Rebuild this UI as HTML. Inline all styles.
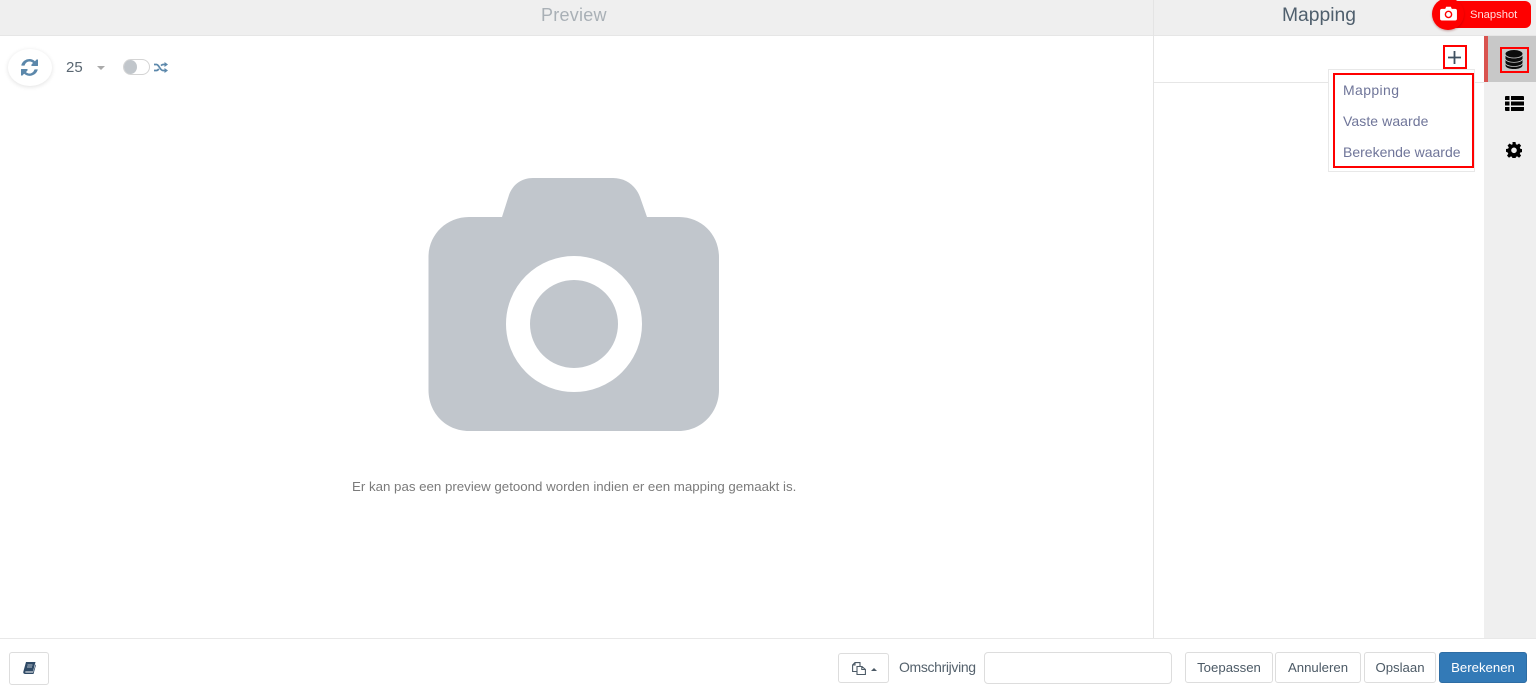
<!DOCTYPE html>
<html><head><meta charset="utf-8">
<style>
*{box-sizing:border-box}
html,body{margin:0;padding:0;width:1536px;height:690px;overflow:hidden;background:#fff;font-family:"Liberation Sans",sans-serif;color:#555}
.a{position:absolute}
.t{position:absolute;white-space:nowrap;line-height:1}
.btn{position:absolute;top:652px;height:31px;border:1px solid #ddd;border-radius:3px;background:#fff;color:#4c5a66;font-size:13.200px;line-height:29px;text-align:center;white-space:nowrap}
</style></head><body>
<div class="a" style="left:0;top:0;width:1536px;height:36px;background:#efefef;border-bottom:1px solid #e6e6e6"></div>
<div class="a" style="left:1153px;top:0;width:1px;height:638px;background:#e4e4e4"></div>
<div class="t" style="left:541px;top:6px;font-size:18px;color:#a9b0b6;letter-spacing:.25px">Preview</div>
<div class="t" style="left:1282px;top:6px;font-size:19.300px;color:#4f5f6d">Mapping</div>

<!-- Snapshot -->
<div class="a" style="left:1440px;top:1px;width:91px;height:27px;background:#fe0000;border-radius:6px"></div>
<div class="a" style="left:1432px;top:-2px;width:32px;height:32px;background:#fe0000;border-radius:50%;box-shadow:0 1px 2px rgba(120,0,0,.35)"></div>
<svg class="a" style="left:1439px;top:6px" width="19" height="15" viewBox="0 0 19 16"><path fill="#fff" d="M2.500 3H6L7 .8h5L13 3h3.500A2 2 0 0 1 18.500 5v8.500a2 2 0 0 1-2 2h-14a2 2 0 0 1-2-2V5a2 2 0 0 1 2-2z"/><circle cx="9.500" cy="9" r="3.300" fill="none" stroke="#fe0000" stroke-width="1.500"/></svg>
<div class="t" style="left:1470px;top:10px;font-size:11.200px;color:#ffdcdc">Snapshot</div>

<!-- right sidebar -->
<div class="a" style="left:1484px;top:36px;width:52px;height:602px;background:#efefef"></div>
<div class="a" style="left:1484px;top:36px;width:52px;height:46px;background:#c8c8c8"></div>
<div class="a" style="left:1484px;top:36px;width:4px;height:46px;background:#d9534f"></div>
<div class="a" style="left:1500px;top:47px;width:29px;height:26px;border:2px solid #f00"></div>
<svg class="a" style="left:1505px;top:50px" width="18" height="19" viewBox="0 0 18 19"><ellipse cx="9" cy="3.800" rx="8.500" ry="3.800" fill="#0c0c0c"/><path fill="#0c0c0c" d="M.5 5.800C2 7.800 5.500 8.400 9 8.400s7-.6 8.500-2.600v3C16.500 11 13 12 9 12S1.500 11 .5 8.800zM.5 10C2 12 5.500 12.700 9 12.700s7-.7 8.500-2.700v3C16.500 15 13 16 9 16S1.500 15 .5 13zM.5 14.200C2 16.200 5.500 16.800 9 16.800s7-.6 8.500-2.600v1C17.500 17.500 13.700 19 9 19S.5 17.500.5 15.200z"/></svg>
<svg class="a" style="left:1505px;top:96px" width="19" height="15" viewBox="0 0 19 15"><path fill="#000" d="M0 1a1 1 0 0 1 1-1h3.500v4H0zM6 0h12a1 1 0 0 1 1 1v3H6zM0 5.500h4.500v4H0zM6 5.500h13v4H6zM0 11h4.500v4H1a1 1 0 0 1-1-1zM6 11h13v3a1 1 0 0 1-1 1H6z"/></svg>
<svg class="a" style="left:1506px;top:142px" width="16" height="16" viewBox="0 0 16 16"><path fill="#000" fill-rule="evenodd" d="M6.500 0h3l.4 2.200 1.300.6L13.100 1.500l2 2.100-1.300 1.900.5 1.300 2.200.4v2.800l-2.200.5-.5 1.200 1.300 1.900-2 2.100-1.900-1.300-1.300.5-.4 2.200h-3l-.4-2.200-1.200-.5-1.900 1.300-2-2.100 1.300-1.900-.6-1.200L0 9.800V7l2.200-.4.600-1.300L1.500 3.600l2-2.100 1.900 1.300 1.200-.6zM8 5.500a2.800 2.800 0 1 0 0 5.600 2.800 2.800 0 0 0 0-5.600z"/></svg>

<!-- mapping panel -->
<div class="a" style="left:1154px;top:82px;width:330px;height:1px;background:#e6e6e6"></div>
<div class="a" style="left:1443px;top:45px;width:24px;height:24px;border:2px solid #f00"></div>
<svg class="a" style="left:1448px;top:51px" width="13" height="13" viewBox="0 0 13 13"><path d="M6.500 0v13M0 6.500h13" stroke="#3f5060" stroke-width="1.800"/></svg>
<div class="a" style="left:1328px;top:69px;width:147px;height:103px;background:#fff;border:1px solid #e8e8e8"></div>
<div class="a" style="left:1333px;top:73px;width:141px;height:95px;border:2px solid #f00;background:#fff"></div>
<div class="t" style="left:1343px;top:83px;font-size:14px;color:#6f7599;letter-spacing:.38px">Mapping</div>
<div class="t" style="left:1343px;top:114px;font-size:14px;color:#6f7599;letter-spacing:.08px">Vaste waarde</div>
<div class="t" style="left:1343px;top:145px;font-size:14px;color:#6f7599;letter-spacing:0">Berekende waarde</div>

<!-- toolbar -->
<div class="a" style="left:8px;top:49px;width:44px;height:37px;background:#fff;border-radius:50%;box-shadow:0 1px 5px rgba(0,0,0,.12)"></div>
<svg class="a" style="left:21px;top:59px" width="17" height="17" viewBox="0 0 17 17"><path fill="#5c88ab" d="M8.500 0c2.100 0 4 .8 5.400 2.200L15.600.5c.4-.3 1.400-.2 1.400.5v5.500c0 .3-.2.500-.5.500H11c-.6 0-.9-1-.5-1.400l1.500-1.700A5 5 0 0 0 3.700 6.200c-.1.300-.3.400-.6.400H.8c-.4 0-.6-.3-.5-.6A8.500 8.500 0 0 1 8.500 0zM.5 10h5.500c.6 0 .9 1 .5 1.400l-1.500 1.700a5 5 0 0 0 8.300-2.300c.1-.3.300-.4.600-.4h2.300c.4 0 .6.300.5.600A8.500 8.500 0 0 1 3.100 14.800L1.400 16.500c-.4.300-1.400.2-1.400-.5v-5.500c0-.3.200-.5.500-.5z"/></svg>
<div class="t" style="left:66px;top:60px;font-size:15px;color:#5a6772">25</div>
<div class="a" style="left:97px;top:66px;width:0;height:0;border-left:4px solid transparent;border-right:4px solid transparent;border-top:4px solid #aaa"></div>
<div class="a" style="left:123px;top:59px;width:27px;height:16px;border:1px solid #d4d4d4;border-radius:8px;background:#fff"></div>
<div class="a" style="left:124px;top:60px;width:13px;height:14px;border-radius:50%;background:#c1c6cb"></div>
<svg class="a" style="left:154px;top:62px" width="14" height="11" viewBox="0 0 14 11"><path fill="none" stroke="#5c88ab" stroke-width="1.700" d="M0 2.500h2.500c2.500 0 3.500 6 6.500 6h2M0 8.500h2.500c1 0 1.700-.7 2.300-1.600M7 3.600c.6-.6 1.200-1.100 2-1.100h2"/><path fill="#5c88ab" d="M10.500 0 14 2.500 10.500 5zM10.500 6 14 8.500 10.500 11z"/></svg>

<!-- big camera -->
<svg class="a" style="left:428px;top:178px" width="292" height="253" viewBox="428 178 292 253"><path fill="#c1c6cc" d="M533 178h80c13 0 23 8 27 19l7 20h32c23 0 40 18 40 40v133c0 23-18 41-40 41H469c-23 0-40.500-18-40.500-41V257c0-22 17.500-40 40.500-40h33l7-22c4-11 13-17 24-17z"/><circle cx="574" cy="324" r="56" fill="none" stroke="#fff" stroke-width="24"/></svg>
<div class="t" style="left:352px;top:480px;font-size:13.300px;color:#7b7b7b;letter-spacing:-.01px">Er kan pas een preview getoond worden indien er een mapping gemaakt is.</div>

<!-- footer -->
<div class="a" style="left:0;top:638px;width:1536px;height:1px;background:#e8e8e8"></div>
<div class="btn" style="left:9px;top:652px;width:40px;height:33px"></div>
<svg class="a" style="left:23px;top:662px" width="13" height="12" viewBox="0 0 13 12"><path fill="#2f4a66" d="M3 0h9.500L10 9.500H2.800c-.8 0-.8 1 0 1H10l2.500-8 .5.500-2.500 9H2C.8 12 0 11 .3 9.800z"/><path stroke="#dfe6ec" stroke-width=".8" d="M4.500 3h5M4 5h5"/></svg>
<div class="btn" style="left:838px;top:653px;width:51px;height:30px"></div>
<svg class="a" style="left:852px;top:662px" width="14" height="13" viewBox="0 0 14 13"><path fill="none" stroke="#4c5a66" stroke-width="1.100" d="M4.500 9.500H.6V3L3 .6h5V4M5 4.500h5l3.400 3v5H5zM3 .6V3H.6M9.800 4.500V7.500h3.600"/></svg>
<div class="a" style="left:871px;top:668px;width:0;height:0;border-left:3px solid transparent;border-right:3px solid transparent;border-bottom:3px solid #4c5a66"></div>
<div class="t" style="left:899px;top:660px;font-size:14px;color:#55626d;letter-spacing:-.35px">Omschrijving</div>
<div class="a" style="left:984px;top:652px;width:188px;height:32px;border:1px solid #ddd;border-radius:4px;background:#fff"></div>
<div class="btn" style="left:1185px;top:652px;width:88px">Toepassen</div>
<div class="btn" style="left:1275px;top:652px;width:86px">Annuleren</div>
<div class="btn" style="left:1364px;top:652px;width:72px">Opslaan</div>
<div class="btn" style="left:1439px;top:652px;width:88px;background:#337ab7;border-color:#2e6da4;color:#fff">Berekenen</div>
</body></html>
